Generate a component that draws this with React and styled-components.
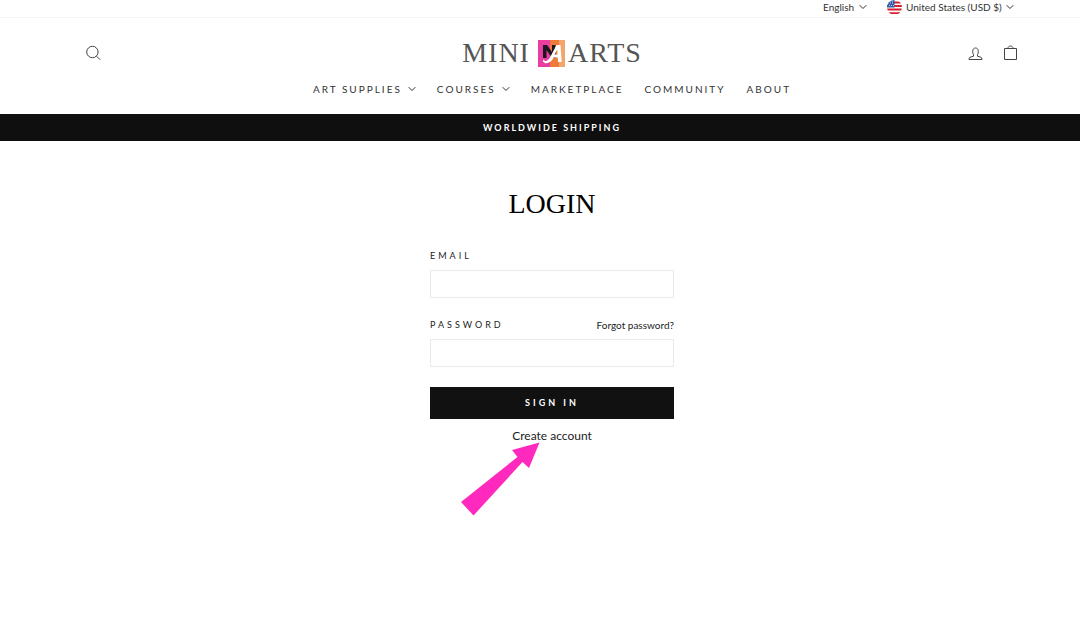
import React from "react";
import styled, { createGlobalStyle } from "styled-components";

const GlobalStyle = createGlobalStyle`
  *, *::before, *::after { box-sizing: border-box; }
  body {
    margin: 0;
    background: #fff;
    color: #1c1d1d;
    font-family: Lato, "Open Sans", sans-serif;
    font-size: 12px;
    line-height: 20px;
  }
  a { color: inherit; text-decoration: none; }
  button, select, input { font: inherit; color: inherit; }
`;

const TopBar = styled.div`
  display: flex;
  justify-content: flex-end;
  align-items: flex-start;
  gap: 20px;
  height: 18px;
  padding-right: 66px;
  border-bottom: 1px solid #f3f3f3;
  color: #333;
`;

const Picker = styled.label`
  display: flex;
  align-items: center;
  height: 14px;
`;

const PickerSelect = styled.select`
  appearance: none;
  border: 0;
  padding: 0 16px 0 0;
  margin-right: -12px;
  background: transparent;
  font-size: 10px;
  line-height: 14px;
  cursor: pointer;
`;

const Flag = styled.svg`
  width: 15px;
  height: 15px;
  margin-right: 4px;
`;

const ChevronIcon = styled.svg`
  width: 8px;
  height: 6px;
  fill: none;
  stroke: currentColor;
  pointer-events: none;
`;

const Header = styled.header`
  padding: 17px 62px 15px 86px;
  color: #333;
`;

const HeaderRow = styled.div`
  display: grid;
  grid-template-columns: 1fr auto 1fr;
  align-items: center;
  height: 36px;
`;

const IconGroup = styled.div`
  display: flex;
  justify-content: flex-end;
  gap: 20px;
`;

const IconButton = styled.button`
  justify-self: start;
  display: flex;
  padding: 0;
  border: 0;
  background: none;
  cursor: pointer;
`;

const IconLink = styled.a`
  display: flex;
`;

const LineIcon = styled.svg`
  width: 15px;
  height: 16px;
  fill: none;
  stroke: #444;
`;

const Logo = styled.a`
  display: flex;
  align-items: center;
  color: #555;
  font-family: "Liberation Serif", serif;
  font-size: 28px;
  line-height: 36px;
  letter-spacing: 1px;
`;

const LogoMark = styled.svg`
  width: 27px;
  height: 27px;
  margin: 0 3px 0 8px;
`;

const Nav = styled.nav`
  display: flex;
  justify-content: center;
  gap: 21px;
  margin-top: 8px;
`;

const navText = `
  font-size: 10px;
  line-height: 20px;
  letter-spacing: 2px;
  text-transform: uppercase;
`;

const NavLink = styled.a`
  ${navText}
`;

const NavButton = styled.button`
  ${navText}
  display: flex;
  align-items: center;
  gap: 6px;
  padding: 0;
  border: 0;
  background: none;
  cursor: pointer;
`;

const Announcement = styled.div`
  padding: 0 0 0 24px;
  background: #0f0f0f;
  color: #fff;
  text-align: center;
  font-size: 9px;
  font-weight: 700;
  line-height: 27px;
  letter-spacing: 2px;
  text-transform: uppercase;
`;

const Main = styled.main`
  display: flex;
  flex-direction: column;
  align-items: center;
  padding: 47px 0 160px 24px;
`;

const Title = styled.h1`
  margin: 0 0 26px;
  color: #000;
  font-family: "Liberation Serif", serif;
  font-size: 28px;
  font-weight: 400;
  line-height: 32px;
  text-transform: uppercase;
`;

const Form = styled.form`
  display: flex;
  flex-direction: column;
  width: 100%;
  max-width: 244px;
`;

const Field = styled.div`
  margin-bottom: 17px;
`;

const FieldHead = styled.div`
  display: flex;
  justify-content: space-between;
  align-items: center;
  height: 20px;
  margin-bottom: 4px;
`;

const FieldLabel = styled.label`
  font-size: 9px;
  letter-spacing: 3px;
  text-transform: uppercase;
`;

const SmallLink = styled.a`
  font-size: 10px;
`;

const TextInput = styled.input`
  display: block;
  width: 100%;
  height: 28px;
  padding: 4px 8px;
  border: 1px solid #ebebe6;
  border-radius: 0;
  background: #fff;
`;

const SubmitButton = styled.button`
  height: 32px;
  margin-top: 3px;
  border: 0;
  background: #111;
  color: #fff;
  font-size: 9px;
  font-weight: 700;
  letter-spacing: 3px;
  text-transform: uppercase;
  cursor: pointer;
`;

const CreateAccount = styled.div`
  position: relative;
  align-self: center;
  margin-top: 7px;
`;

const Pointer = styled.svg`
  position: absolute;
  top: 16px;
  right: 52px;
  width: 79px;
  height: 74px;
  fill: #ff29bd;
  pointer-events: none;
`;

function Chevron() {
  return (
    <ChevronIcon viewBox="0 0 8 6" aria-hidden="true">
      <path d="M0.7 1.2 4 4.5 7.3 1.2" />
    </ChevronIcon>
  );
}

function UsFlag() {
  return (
    <Flag viewBox="0 0 15 15" aria-hidden="true">
      <clipPath id="flag-round"><circle cx="7.5" cy="7.5" r="7.5" /></clipPath>
      <g clipPath="url(#flag-round)">
        <rect width="15" height="15" fill="#fff" />
        <path d="M0 2.5h15M0 6h15M0 9.5h15M0 13.2h15" stroke="#d8212f" strokeWidth="1.8" />
        <rect width="7.5" height="7.5" fill="#2d5fae" />
        <path d="M1 3h6M2 5.5h5M3 1h4" stroke="#fff" strokeWidth="0.8" strokeDasharray="0.9 1.1" />
      </g>
    </Flag>
  );
}

export default function App() {
  return (
    <>
      <GlobalStyle />
      <TopBar>
        <Picker>
          <PickerSelect aria-label="Language" defaultValue="en">
            <option value="en">English</option>
          </PickerSelect>
          <Chevron />
        </Picker>
        <Picker>
          <UsFlag />
          <PickerSelect aria-label="Currency" defaultValue="usd">
            <option value="usd">United States (USD $)</option>
          </PickerSelect>
          <Chevron />
        </Picker>
      </TopBar>
      <Header>
        <HeaderRow>
          <IconButton type="button" aria-label="Search">
            <LineIcon viewBox="0 0 15 16">
              <circle cx="6.4" cy="7" r="5.7" />
              <path d="m10.6 11.2 3.6 3.6" />
            </LineIcon>
          </IconButton>
          <Logo href="#" aria-label="Mini Arts">
            <span>MINI</span>
            <LogoMark viewBox="0 0 27 27" aria-hidden="true">
              <rect width="27" height="27" fill="#f0793c" />
              <rect width="12" height="27" fill="#e83e9f" />
              <rect x="21" width="6" height="27" fill="#f4a66a" />
              <path d="M5 18V5h4l5 7V5h3.5v13H14L8.5 10v8z" fill="#1c1620" />
              <path d="M5 19.500c2 2.500 5 1.500 7-2l6.500-12.500h4l1.200 17h-3.700l-.3-4.500h-4c-2.700 5.500-8.200 7.500-10.700 4zM16.500 14.500h3l-.3-5z" fill="#fff" fillRule="evenodd" />
            </LogoMark>
            <span>ARTS</span>
          </Logo>
          <IconGroup>
            <IconLink href="#" aria-label="Log in">
              <LineIcon viewBox="0 0 15 16">
                <path d="M5.5 9.7C4.400 8 4 3 7.500 3s3.100 5 2 6.700v1.500l3.500 1.100c.8.300 1 1 1 2.200H1c0-1.200.2-1.900 1-2.200l3.500-1.100z" />
              </LineIcon>
            </IconLink>
            <IconLink href="#" aria-label="Cart">
              <LineIcon viewBox="0 0 15 16">
                <path d="M1.5 3.5h12v11h-12zM4.800 3.500c.2-3.300 5.200-3.300 5.400 0" />
              </LineIcon>
            </IconLink>
          </IconGroup>
        </HeaderRow>
        <Nav aria-label="Main">
          <NavButton type="button">Art supplies <Chevron /></NavButton>
          <NavButton type="button">Courses <Chevron /></NavButton>
          <NavLink href="#">Marketplace</NavLink>
          <NavLink href="#">Community</NavLink>
          <NavLink href="#">About</NavLink>
        </Nav>
      </Header>
      <Announcement>Worldwide shipping</Announcement>
      <Main>
        <Title>Login</Title>
        <Form onSubmit={(e) => e.preventDefault()}>
          <Field>
            <FieldHead>
              <FieldLabel htmlFor="email">Email</FieldLabel>
            </FieldHead>
            <TextInput id="email" type="email" />
          </Field>
          <Field>
            <FieldHead>
              <FieldLabel htmlFor="password">Password</FieldLabel>
              <SmallLink href="#">Forgot password?</SmallLink>
            </FieldHead>
            <TextInput id="password" type="password" />
          </Field>
          <SubmitButton type="submit">Sign in</SubmitButton>
          <CreateAccount>
            <a href="#">Create account</a>
            <Pointer viewBox="0 0 79 74" aria-hidden="true">
              <path d="M78.5 0.5 51 8l5.500 7L0 60l12.500 13.500L61.500 20l6.500 6z" />
            </Pointer>
          </CreateAccount>
        </Form>
      </Main>
    </>
  );
}
